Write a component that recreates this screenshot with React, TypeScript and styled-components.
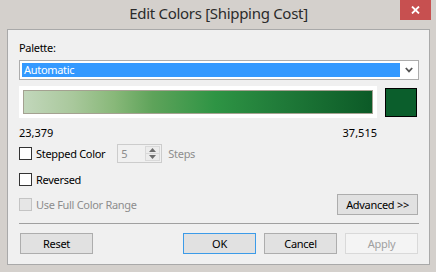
import React from "react";
import styled, { createGlobalStyle } from "styled-components";

const Global = createGlobalStyle`
  html, body { margin: 0; padding: 0; background: #d4d0cc; }
  * { box-sizing: border-box; }
`;

const FONT = `"Noto Sans", "Open Sans", sans-serif`;

const Window = styled.div`
  position: relative;
  width: 436px;
  height: 272px;
  background: #d4d0cc;
  display: flex;
  flex-direction: column;
  padding: 0 6px 7px 7px;
  font-family: ${FONT};
  font-size: 11px;
  letter-spacing: -0.3px;
  color: #000;
`;

const TitleBar = styled.div`
  height: 29px;
  display: flex;
  justify-content: center;
  align-items: flex-start;
  padding-top: 3px;
  font-size: 15px;
  line-height: 20px;
  color: #2b2b2b;
`;

const CloseButton = styled.div`
  position: absolute;
  top: 0;
  right: 5px;
  width: 31px;
  height: 20px;
  background: #c75050;
  display: flex;
  align-items: center;
  justify-content: center;
`;

const Panel = styled.div`
  flex: 1;
  background: #f0f0f0;
  border: 1px solid #a9a9a9;
  padding: 10px 10px 0 11px;
  display: flex;
  flex-direction: column;
`;

const Label = styled.div`
  line-height: 15px;
  height: 15px;
`;

const Select = styled.div`
  margin-top: 5px;
  height: 20px;
  border: 1px solid #acacac;
  background: #fff;
  padding: 2px 0 2px 2px;
  display: flex;
  align-items: stretch;
`;

const SelectValue = styled.div`
  flex: 1;
  background: #3399ff;
  color: #fff;
  padding-left: 2px;
  line-height: 14px;
`;

const Chevron = styled.div`
  width: 18px;
  display: flex;
  align-items: center;
  justify-content: center;
`;

const RampRow = styled.div`
  margin-top: 6px;
  display: flex;
  align-items: flex-start;
  gap: 8px;
`;

const RampFrame = styled.div`
  width: 358px;
  height: 32px;
  background: #fff;
  padding: 4px;
`;

const Ramp = styled.div`
  height: 100%;
  border: 1px solid #a4a191;
  background: linear-gradient(
    to right,
    #c2d7bb 0%,
    #a9c89c 14%,
    #88b879 26%,
    #5ea35a 37%,
    #2e9444 55%,
    #217d3a 72%,
    #0c5a27 100%
  );
`;

const Swatch = styled.div<{ $color: string }>`
  margin-top: 2px;
  width: 32px;
  height: 29px;
  border: 1px solid #000;
  background: ${(p) => p.$color};
`;

const RangeLabels = styled.div`
  margin-top: 7px;
  width: 358px;
  display: flex;
  justify-content: space-between;
  line-height: 15px;
  letter-spacing: 0;
`;

const OptionRow = styled.div<{ $top: number; $h: number }>`
  margin-top: ${(p) => p.$top}px;
  height: ${(p) => p.$h}px;
  display: flex;
  align-items: center;
  padding-right: 1px;
`;

const Box = styled.div<{ $disabled?: boolean }>`
  width: 13px;
  height: 13px;
  border: 1px solid ${(p) => (p.$disabled ? "#c4c4c4" : "#333")};
  background: ${(p) => (p.$disabled ? "#e6e6e6" : "#fff")};
  margin-right: 4px;
  flex: none;
`;

const CheckText = styled.span<{ $disabled?: boolean }>`
  color: ${(p) => (p.$disabled ? "#8d8d8d" : "#000")};
  line-height: 15px;
`;

const Spin = styled.div`
  margin-left: 12px;
  width: 45px;
  height: 19px;
  border: 1px solid #cccccc;
  display: flex;
`;

const SpinValue = styled.div`
  flex: 1;
  color: #8c8c8c;
  padding-left: 3px;
  line-height: 17px;
`;

const SpinButtons = styled.div`
  width: 16px;
  display: flex;
  flex-direction: column;
  padding: 1px 1px 1px 0;
`;

const SpinBtn = styled.div`
  flex: 1;
  display: flex;
  align-items: center;
  justify-content: center;
  border: 1px solid #d9d9d9;
  background: #ececec;
  & + & { border-top: none; }
`;

const StepsText = styled.span`
  margin-left: 6px;
  color: #8d8d8d;
  line-height: 15px;
`;

const Spacer = styled.div`
  flex: 1;
`;

const Button = styled.div<{ $w: number; $variant?: "default" | "focus" | "disabled" }>`
  width: ${(p) => p.$w}px;
  height: 21px;
  display: flex;
  align-items: center;
  justify-content: center;
  background: ${(p) => (p.$variant === "disabled" ? "#f4f4f4" : "#e1e1e1")};
  border: 1px solid
    ${(p) =>
      p.$variant === "focus" ? "#3c9be8" : p.$variant === "disabled" ? "#d9d9d9" : "#adadad"};
  color: ${(p) => (p.$variant === "disabled" ? "#a0a0a0" : "#000")};
  line-height: 15px;
`;

const Separator = styled.div`
  margin-top: 8px;
  height: 1px;
  background: #a0a0a0;
`;

const ButtonRow = styled.div`
  margin-top: 9px;
  padding: 0 1px;
  display: flex;
  gap: 8px;
`;

export default function App() {
  return (
    <>
      <Global />
      <Window>
        <TitleBar>Edit Colors [Shipping Cost]</TitleBar>
        <CloseButton>
          <svg width="9" height="8" viewBox="0 0 9 8">
            <path d="M1 0.5 L8 7.5 M8 0.5 L1 7.5" stroke="#fff" strokeWidth="1.8" />
          </svg>
        </CloseButton>
        <Panel>
          <Label>Palette:</Label>
          <Select>
            <SelectValue>Automatic</SelectValue>
            <Chevron>
              <svg width="8" height="6" viewBox="0 0 8 6">
                <path d="M0.8 1 L4 4.4 L7.2 1" stroke="#555" strokeWidth="1.8" fill="none" />
              </svg>
            </Chevron>
          </Select>
          <RampRow>
            <RampFrame>
              <Ramp />
            </RampFrame>
            <Swatch $color="#0b5e2c" />
          </RampRow>
          <RangeLabels>
            <span>23,379</span>
            <span>37,515</span>
          </RangeLabels>
          <OptionRow $top={4} $h={19}>
            <Box />
            <CheckText>Stepped Color</CheckText>
            <Spin>
              <SpinValue>5</SpinValue>
              <SpinButtons>
                <SpinBtn>
                  <svg width="7" height="4" viewBox="0 0 7 4">
                    <path d="M0 4 L3.5 0 L7 4 Z" fill="#6d6d6d" />
                  </svg>
                </SpinBtn>
                <SpinBtn>
                  <svg width="7" height="4" viewBox="0 0 7 4">
                    <path d="M0 0 L3.5 4 L7 0 Z" fill="#6d6d6d" />
                  </svg>
                </SpinBtn>
              </SpinButtons>
            </Spin>
            <StepsText>Steps</StepsText>
          </OptionRow>
          <OptionRow $top={7} $h={19}>
            <Box />
            <CheckText>Reversed</CheckText>
          </OptionRow>
          <OptionRow $top={5} $h={21}>
            <Box $disabled />
            <CheckText $disabled>Use Full Color Range</CheckText>
            <Spacer />
            <Button $w={81}>Advanced &gt;&gt;</Button>
          </OptionRow>
          <Separator />
          <ButtonRow>
            <Button $w={73}>Reset</Button>
            <Spacer />
            <Button $w={73} $variant="focus">OK</Button>
            <Button $w={73}>Cancel</Button>
            <Button $w={73} $variant="disabled">Apply</Button>
          </ButtonRow>
        </Panel>
      </Window>
    </>
  );
}
